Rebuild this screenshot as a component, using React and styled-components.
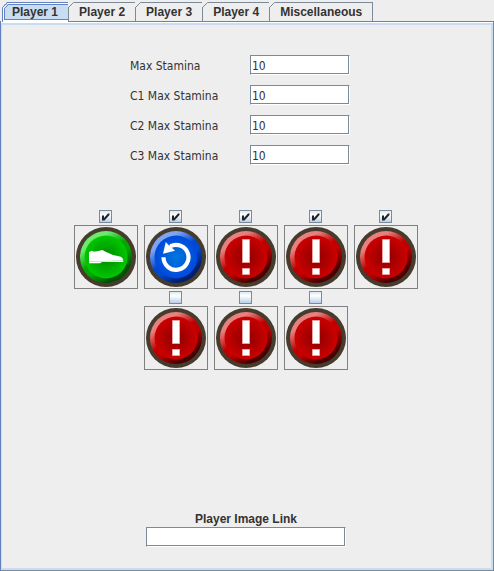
import React, { useState } from 'react';
import styled, { createGlobalStyle, css } from 'styled-components';

const Global = createGlobalStyle`
  * { box-sizing: border-box; }
  body {
    margin: 0;
    background: #eeeeee;
    color: #333333;
    font-family: "DejaVu Sans Condensed", "DejaVu Sans", sans-serif;
    font-size: 12px;
  }
`;

const Window = styled.main`
  display: flex;
  flex-direction: column;
  min-height: 100vh;
  padding-top: 2px;
`;

const TabBar = styled.div`
  display: flex;
  height: 20px;
  padding-left: 2px;
  border-bottom: 1px solid #6382bf;
`;

const Tab = styled.button`
  position: relative;
  height: 19px;
  padding: 0 10px;
  border: 0;
  background: none;
  color: #333333;
  font: bold 12px/18px "Liberation Sans", Arial, sans-serif;
  white-space: nowrap;
  border-top: 1px solid #7a8a99;
  border-right: 1px solid #7a8a99;
  ${(p) => p.$active && css`
    height: 20px;
    padding-bottom: 1px;
    border-color: #6382bf;
    background: #c8ddf2;
    box-shadow: inset 0 1px #ffffff, inset 0 -2px #ffffff, inset 0 2px #6382bf, inset 0 -3px #6382bf;
  `}
`;

const Corner = styled.svg`
  position: absolute;
  top: -1px;
  left: -1px;
`;

function TabCorner({ active }) {
  return (
    <Corner width="7" height="20" viewBox="0 0 7 20" aria-hidden="true">
      <path d="M0 0H6L1 5V20H0Z" fill="#eeeeee" />
      {active ? (
        <>
          <path d="M1.500 20V5.500L6.500 .5" fill="none" stroke="#6382bf" />
          <path d="M2.500 20V6L7 1.500" fill="none" stroke="#ffffff" />
          <path d="M3.500 18V6.500L7 3" fill="none" stroke="#6382bf" />
        </>
      ) : (
        <>
          <path d="M.5 5V20" stroke="#7a8a99" />
          <path d="M.5 5.500L5.500 .5" stroke="#7a8a99" />
        </>
      )}
    </Corner>
  );
}

const Panel = styled.section`
  flex: 1;
  display: flex;
  flex-direction: column;
  align-items: center;
  border-left: 1px solid #6382bf;
  border-right: 1px solid #7a8a99;
  border-bottom: 1px solid #7a8a99;
  box-shadow: inset 0 1px #ffffff, inset 1px 0 #c8ddf2, inset -2px -2px #c8ddf2, inset 0 3px #c8ddf2;
  padding: 33px 3px 23px 1px;
`;

const StaminaForm = styled.form`
  display: flex;
  flex-direction: column;
  gap: 10px;
  margin-right: 12px;
`;

const FieldRow = styled.div`
  display: grid;
  grid-template-columns: 120px 100px;
  align-items: center;
`;

const FieldLabel = styled.label`
  padding-top: 2px;
  line-height: 18px;
`;

const TextField = styled.input`
  width: 100%;
  height: 20px;
  padding: 1px 1px 0;
  border: 1px solid #7a8a99;
  border-right-color: #ffffff;
  border-bottom-color: #ffffff;
  box-shadow: inset -1px -1px #7a8a99;
  border-radius: 0;
  outline: 0;
  background: #ffffff;
  color: #333333;
  font: inherit;
`;

const Actions = styled.div`
  display: flex;
  flex-direction: column;
  gap: 2px;
  margin: 45px 0;
`;

const ActionRow = styled.div`
  display: flex;
  justify-content: center;
  gap: 6px;
`;

const ActionItem = styled.div`
  display: flex;
  flex-direction: column;
  align-items: center;
  gap: 2px;
`;

const CheckWrap = styled.span`
  display: grid;
  margin-right: 1px;
  > * { grid-area: 1 / 1; }
  svg { pointer-events: none; }
`;

const CheckBox = styled.input`
  appearance: none;
  width: 13px;
  height: 13px;
  margin: 0;
  border: 1px solid #7a8a99;
  background: linear-gradient(#dde8f3, #ffffff 35%, #b8cfe5);
`;

const IconButton = styled.button`
  display: block;
  width: 64px;
  height: 64px;
  padding: 0;
  border: 1px solid #808080;
  background: #eeeeee;
  svg { display: block; }
`;

const LinkField = styled.div`
  display: flex;
  flex-direction: column;
  align-items: center;
  width: 200px;
  margin-top: auto;
`;

const LinkLabel = styled.label`
  font: bold 12px/16px "Liberation Sans", Arial, sans-serif;
`;

const palettes = {
  green: { hi: '#6fe86f', mid: '#00a800', low: '#005000', edge: '#00c800', core: '#008600' },
  blue: { hi: '#7fa4f2', mid: '#0048d0', low: '#001f6c', edge: '#0048dc', core: '#0078dc' },
  red: { hi: '#e88080', mid: '#c00000', low: '#480000', edge: '#cc0000', core: '#8c0000' },
};

const glyphs = {
  shoe: (
    <>
      <path
        d="M15 27L18 25.700Q20 27 23 26.300L28.500 25L31 26.500L39 30L47 31.800Q49.500 33 49.300 37H28L26 38.300H15Z"
        fill="#ffffff"
      />
      <path d="M15 36.500H27L49 35.500" fill="none" stroke="#9bd89b" strokeWidth=".6" />
    </>
  ),
  undo: (
    <>
      <path d="M19.500 32.300A12.500 12.500 0 1 0 26.500 21.100" fill="none" stroke="#ffffff" strokeWidth="4.200" />
      <path d="M21.800 17L19 28.800L31 25.800L27.500 22.500V19.500L25 20.500Z" fill="#ffffff" />
    </>
  ),
  alert: (
    <g fill="#ffffff" stroke="#eea0a0" strokeWidth="1">
      <path d="M28.500 14.500H35.500V37.500H28.500Z" />
      <path d="M28.500 43.500H35.500V49.500H28.500Z" />
    </g>
  ),
};

function ActionIcon({ id, color, glyph }) {
  const c = palettes[color];
  return (
    <svg width="62" height="62" viewBox="1 1 62 62" aria-hidden="true">
      <defs>
        <linearGradient id={`${id}-rim`} x1=".2" y1=".08" x2=".8" y2=".92">
          <stop offset="0" stopColor={c.hi} />
          <stop offset=".15" stopColor={c.hi} />
          <stop offset=".45" stopColor={c.mid} />
          <stop offset=".6" stopColor={c.mid} />
          <stop offset=".9" stopColor={c.low} />
        </linearGradient>
        <radialGradient id={`${id}-face`}>
          <stop offset="0" stopColor={c.core} />
          <stop offset="1" stopColor={c.edge} />
        </radialGradient>
      </defs>
      <circle cx="32" cy="32" r="30" fill="#463c2d" />
      <circle cx="32" cy="32" r="26" fill={`url(#${id}-rim)`} />
      <circle cx="32" cy="32" r="21.500" fill={`url(#${id}-face)`} />
      {glyphs[glyph]}
    </svg>
  );
}

function Action({ id, name, color, glyph, enabled }) {
  const [on, setOn] = useState(enabled);
  return (
    <ActionItem>
      <CheckWrap>
        <CheckBox
          type="checkbox"
          aria-label={`Enable ${name}`}
          checked={on}
          onChange={(e) => setOn(e.target.checked)}
        />
        {on && (
          <svg width="13" height="13" viewBox="0 0 13 13" aria-hidden="true">
            <path d="M3 5.500H5V8L9 3.500H10.500V5L5.500 10.500H3Z" fill="#222222" />
          </svg>
        )}
      </CheckWrap>
      <IconButton type="button" aria-label={name}>
        <ActionIcon id={id} color={color} glyph={glyph} />
      </IconButton>
    </ActionItem>
  );
}

const tabs = ['Player 1', 'Player 2', 'Player 3', 'Player 4', 'Miscellaneous'];
const fields = ['Max Stamina', 'C1 Max Stamina', 'C2 Max Stamina', 'C3 Max Stamina'];
const alert = (n, enabled) => ({ id: `slot${n}`, name: `Slot ${n}`, color: 'red', glyph: 'alert', enabled });
const rows = [
  [
    { id: 'walk', name: 'Walk', color: 'green', glyph: 'shoe', enabled: true },
    { id: 'turn', name: 'Turn', color: 'blue', glyph: 'undo', enabled: true },
    alert(3, true),
    alert(4, true),
    alert(5, true),
  ],
  [alert(6, false), alert(7, false), alert(8, false)],
];

export default function App() {
  const [current, setCurrent] = useState(0);
  return (
    <Window>
      <Global />
      <TabBar role="tablist">
        {tabs.map((label, i) => (
          <Tab
            key={label}
            type="button"
            role="tab"
            aria-selected={i === current}
            $active={i === current}
            onClick={() => setCurrent(i)}
          >
            <TabCorner active={i === current} />
            {label}
          </Tab>
        ))}
      </TabBar>
      <Panel role="tabpanel" aria-label={tabs[current]}>
        <StaminaForm>
          {fields.map((label, i) => (
            <FieldRow key={label}>
              <FieldLabel htmlFor={`stamina${i}`}>{label}</FieldLabel>
              <TextField id={`stamina${i}`} type="text" defaultValue="10" />
            </FieldRow>
          ))}
        </StaminaForm>
        <Actions>
          {rows.map((row) => (
            <ActionRow key={row[0].id}>
              {row.map((item) => (
                <Action key={item.id} {...item} />
              ))}
            </ActionRow>
          ))}
        </Actions>
        <LinkField>
          <LinkLabel htmlFor="image-link">Player Image Link</LinkLabel>
          <TextField id="image-link" type="text" />
        </LinkField>
      </Panel>
    </Window>
  );
}
